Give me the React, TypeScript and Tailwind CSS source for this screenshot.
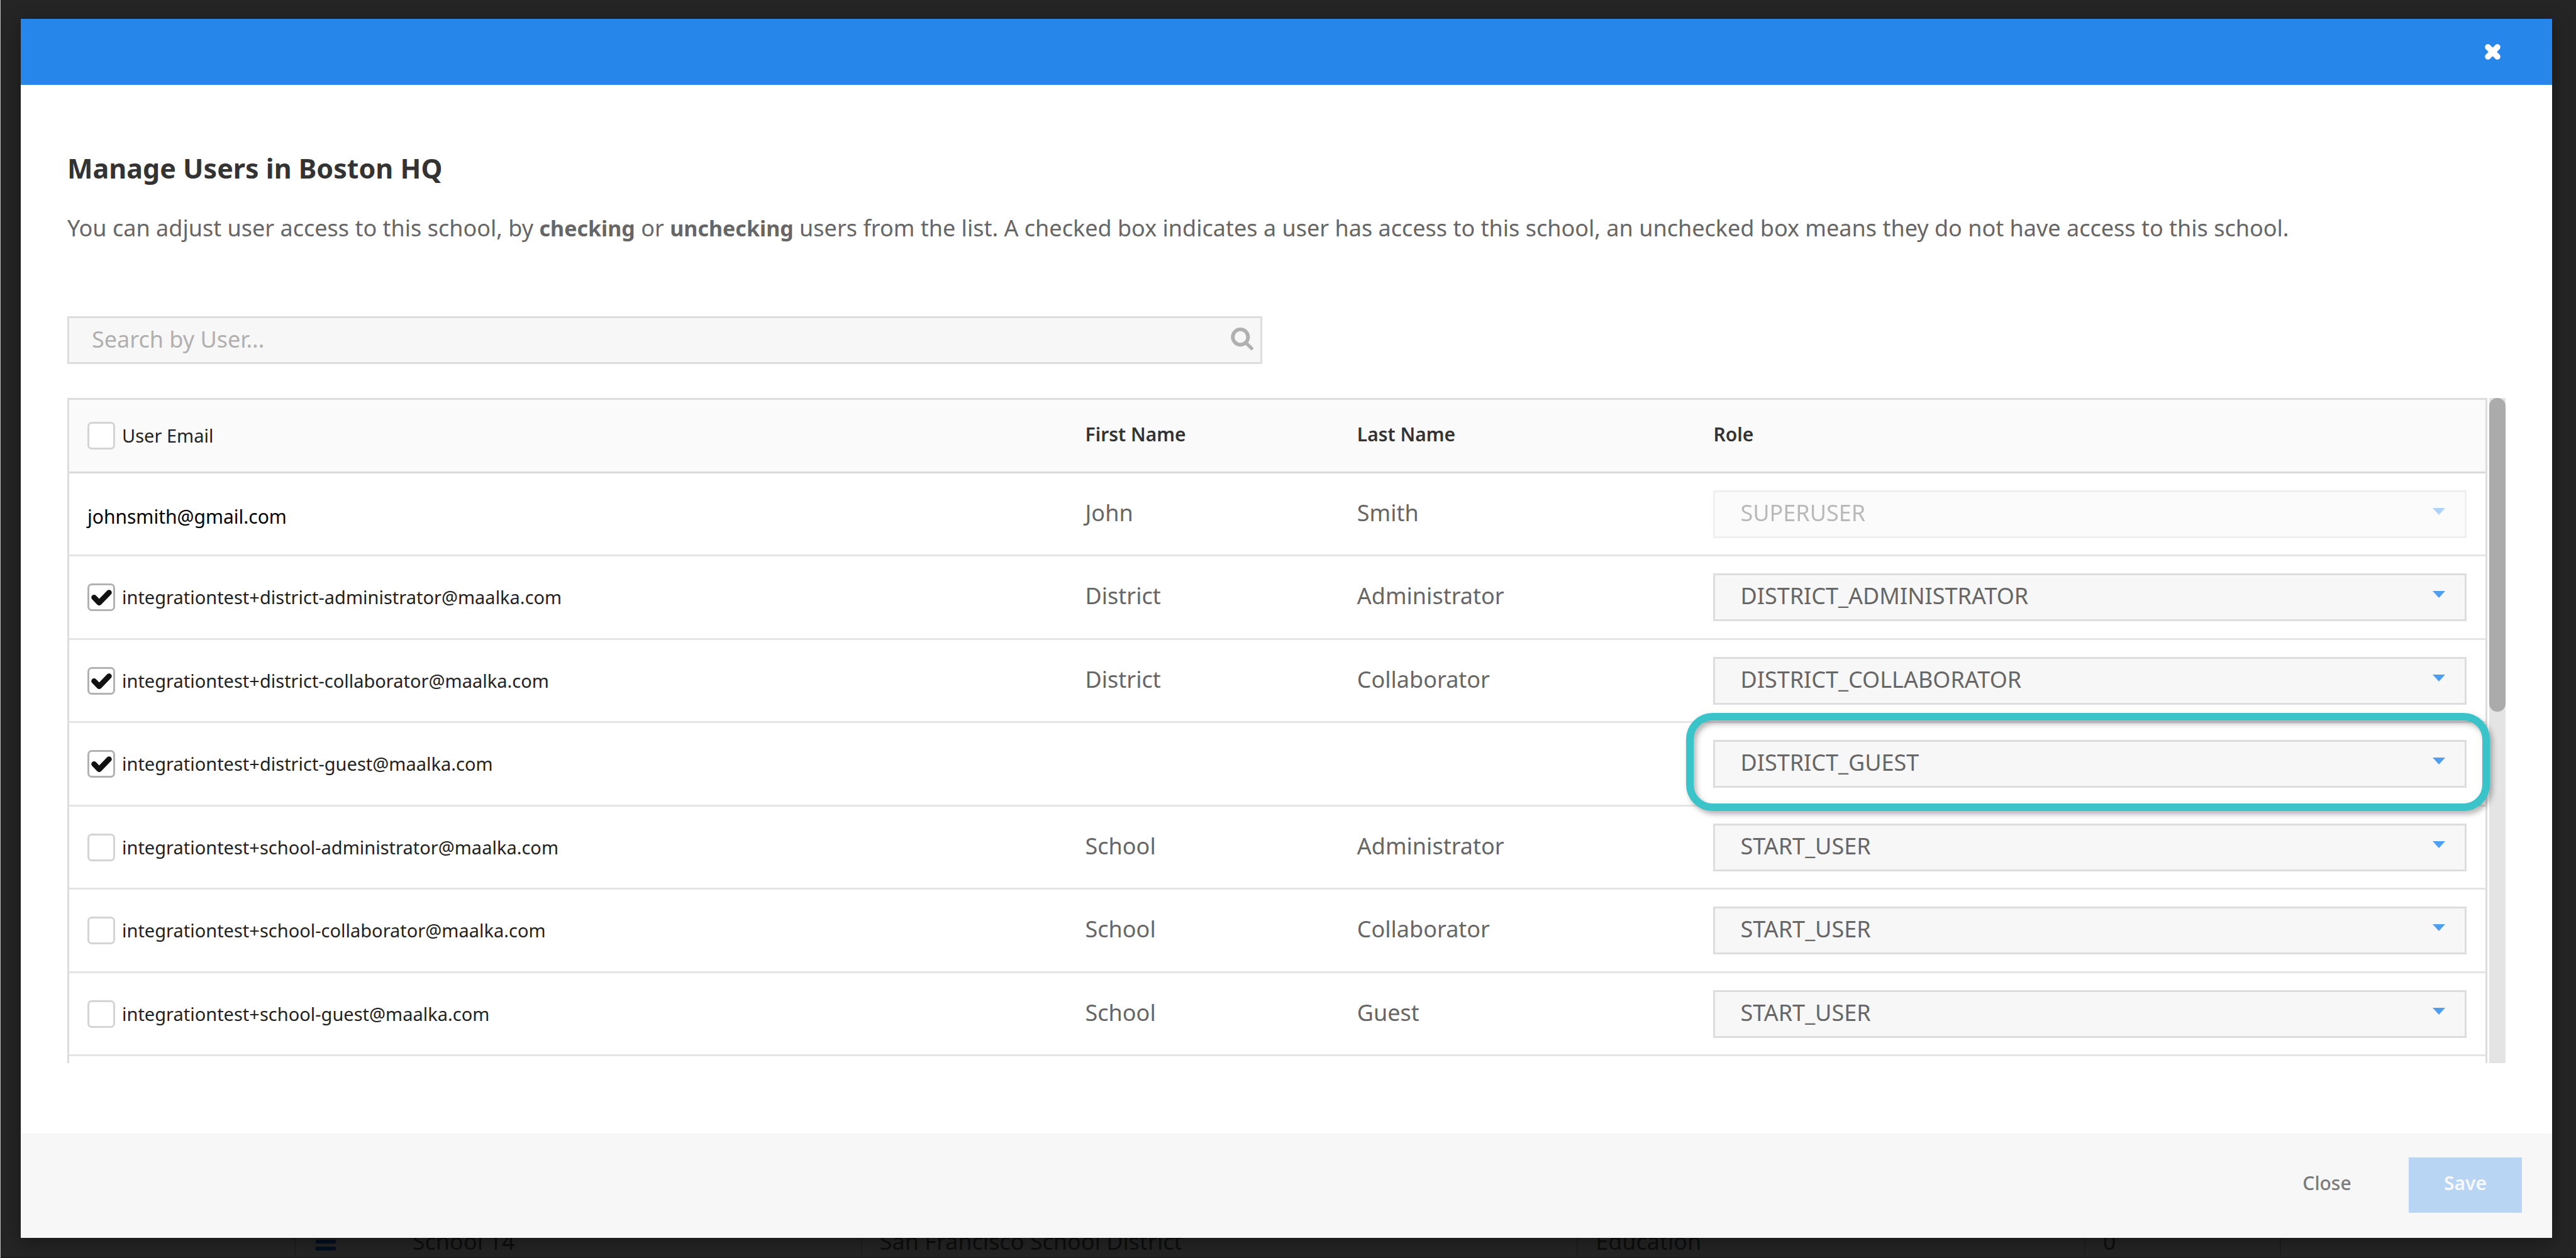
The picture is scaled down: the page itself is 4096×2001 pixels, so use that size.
import React, { useState } from "react";

type Role =
  | "SUPERUSER"
  | "DISTRICT_ADMINISTRATOR"
  | "DISTRICT_COLLABORATOR"
  | "DISTRICT_GUEST"
  | "START_USER";

const ROLES: Role[] = [
  "SUPERUSER",
  "DISTRICT_ADMINISTRATOR",
  "DISTRICT_COLLABORATOR",
  "DISTRICT_GUEST",
  "START_USER",
];

interface User {
  email: string;
  first: string;
  last: string;
  role: Role;
  checked?: boolean;
  locked?: boolean;
  highlighted?: boolean;
}

const USERS: User[] = [
  { email: "johnsmith@gmail.com", first: "John", last: "Smith", role: "SUPERUSER", locked: true },
  { email: "integrationtest+district-administrator@maalka.com", first: "District", last: "Administrator", role: "DISTRICT_ADMINISTRATOR", checked: true },
  { email: "integrationtest+district-collaborator@maalka.com", first: "District", last: "Collaborator", role: "DISTRICT_COLLABORATOR", checked: true },
  { email: "integrationtest+district-guest@maalka.com", first: "", last: "", role: "DISTRICT_GUEST", checked: true, highlighted: true },
  { email: "integrationtest+school-administrator@maalka.com", first: "School", last: "Administrator", role: "START_USER" },
  { email: "integrationtest+school-collaborator@maalka.com", first: "School", last: "Collaborator", role: "START_USER" },
  { email: "integrationtest+school-guest@maalka.com", first: "School", last: "Guest", role: "START_USER" },
];

function CheckboxField({ label, defaultChecked = false }: { label: string; defaultChecked?: boolean }) {
  const [checked, setChecked] = useState(defaultChecked);
  return (
    <label className="flex items-center gap-[11px] text-[29px] leading-10 font-normal text-[#222222]">
      <span className="relative flex">
        <input
          type="checkbox"
          checked={checked}
          onChange={(e) => setChecked(e.target.checked)}
          className="size-11 appearance-none rounded-[7px] border-3 border-[#d4d4d4] bg-white checked:border-[#b2b2b2]"
        />
        {checked && (
          <svg viewBox="0 0 188 188" className="pointer-events-none absolute inset-0 size-11" aria-hidden="true">
            <path d="M45 95 L80 131 L147 62" fill="none" stroke="#111111" strokeWidth="37" strokeLinecap="round" strokeLinejoin="round" />
          </svg>
        )}
      </span>
      {label}
    </label>
  );
}

function RoleSelect({ user }: { user: User }) {
  return (
    <div className={user.locked ? "relative opacity-45" : "relative"}>
      <select
        aria-label={`Role of ${user.email}`}
        defaultValue={user.role}
        disabled={user.locked}
        className="block h-[76px] w-full appearance-none border-3 border-[#dddddd] bg-[#f7f7f7] pb-1 pl-10 text-[36px] text-[#666666] opacity-100"
      >
        {ROLES.map((role) => (
          <option key={role}>{role}</option>
        ))}
      </select>
      <svg viewBox="0 0 20 11" className="pointer-events-none absolute top-7 right-[34px] h-[11px] w-5" aria-hidden="true">
        <path d="M0 0 H20 L10 11 Z" fill="#509eee" />
      </svg>
      {user.highlighted && (
        <div className="pointer-events-none absolute -top-[43px] -right-[37px] -bottom-[37px] -left-[43px] z-10 rounded-[42px] border-12 border-[#3ac3c9] drop-shadow-[4px_5px_4px_rgba(0,0,0,0.3)]" />
      )}
    </div>
  );
}

function PageBehind() {
  return (
    <div aria-hidden="true" className="absolute inset-x-0 bottom-0 flex h-[50px] border-b-2 border-[#1c1c1c] text-[36px] leading-[48px] text-[#0e0e0e]">
      <div className="w-[11.4%]" />
      <div className="flex w-[22%] items-center gap-[122px] border-l-2 border-[#1e1e1e] pl-8">
        <svg viewBox="0 0 32 28" className="h-7 w-8">
          <path d="M0 0 H32 V6 H0 Z M0 11 H32 V17 H0 Z M0 22 H32 V28 H0 Z" fill="#04101f" />
        </svg>
        School 14
      </div>
      <div className="w-[27.8%] border-l-2 border-[#1e1e1e] pl-7">San Francisco School District</div>
      <div className="w-[19.7%] border-l-2 border-[#1e1e1e] pl-7">Education</div>
      <div className="w-[7.6%] border-l-2 border-[#1e1e1e] pl-7">0</div>
      <div className="flex-1 border-l-2 border-[#1e1e1e]" />
    </div>
  );
}

export default function App() {
  return (
    <div className="relative flex h-screen overflow-hidden border-l border-[#bbbbbb] bg-[#252525] pt-[30px] pr-[38px] pb-8 pl-8 font-['Noto_Sans',sans-serif]">
      <PageBehind />

      <section role="dialog" aria-labelledby="dialog-title" className="relative flex min-w-0 flex-1 flex-col bg-white shadow-[0_8px_30px_rgba(0,0,0,0.35)]">
        <header className="flex h-[105px] shrink-0 items-center justify-end bg-[#2686ea] pr-[82px]">
          <button type="button" aria-label="Close dialog" className="flex">
            <svg viewBox="0 0 106 106" className="size-[25px]" aria-hidden="true">
              <path d="M21 21 L85 85 M85 21 L21 85" fill="none" stroke="#ffffff" strokeWidth="40" strokeLinecap="round" />
            </svg>
          </button>
        </header>

        <main className="flex min-h-0 flex-1 flex-col pt-[105px] pr-[74px] pb-28 pl-[74px]">
          <h1 id="dialog-title" className="text-[43px] leading-14 font-bold text-[#333333]">
            Manage Users in Boston HQ
          </h1>
          <p className="mt-[43px] text-[36px] leading-12 text-[#666666]">
            You can adjust user access to this school, by <strong className="text-[34px] font-bold">checking</strong> or{" "}
            <strong className="text-[34px] font-bold">unchecking</strong> users from the list. A checked box indicates a user has
            access to this school, an unchecked box means they do not have access to this school.
          </p>

          <div className="relative mt-[116px] w-[49%]">
            <input
              type="text"
              aria-label="Search by user"
              placeholder="Search by User..."
              className="block h-[76px] w-full border-3 border-[#dddddd] bg-[#f7f7f7] pr-16 pb-1 pl-9 text-[36px] text-[#666666] placeholder:text-[#b0b0b0]"
            />
            <svg viewBox="0 0 148 148" className="pointer-events-none absolute top-[18px] right-[14px] size-9" aria-hidden="true">
              <circle cx="63" cy="62" r="50" fill="none" stroke="#b0b0b0" strokeWidth="24" />
              <path d="M100 100 L136 136" stroke="#b0b0b0" strokeWidth="22" strokeLinecap="round" />
            </svg>
          </div>

          <div className="mt-[54px] flex min-h-0 flex-1 gap-[3px] overflow-hidden">
            <div className="min-w-0 flex-1 border-x-3 border-t-3 border-[#dddddd]">
              <table className="w-full table-fixed border-separate border-spacing-0 text-left">
                <colgroup>
                  <col className="w-[42.05%]" />
                  <col className="w-[11.25%]" />
                  <col className="w-[14.75%]" />
                  <col />
                </colgroup>
                <thead className="bg-[#fafafa] text-[30px] leading-10 text-[#333333]">
                  <tr className="h-[117px]">
                    <th scope="col" className="border-b-3 border-[#dadada] pl-[29px]">
                      <CheckboxField label="User Email" />
                    </th>
                    <th scope="col" className="border-b-3 border-[#dadada] pb-1 font-semibold">First Name</th>
                    <th scope="col" className="border-b-3 border-[#dadada] pb-1 font-semibold">Last Name</th>
                    <th scope="col" className="border-b-3 border-[#dadada] pb-1 font-semibold">Role</th>
                  </tr>
                </thead>
                <tbody className="text-[36px] leading-12 text-[#666666]">
                  {USERS.map((user) => (
                    <tr key={user.email} className="h-[132px] even:h-[133px]">
                      <td className="border-b-3 border-[#e5e5e5] pl-[29px]">
                        {user.locked ? (
                          <span className="block pt-2 text-[30px] leading-10 text-black">{user.email}</span>
                        ) : (
                          <CheckboxField label={user.email} defaultChecked={user.checked} />
                        )}
                      </td>
                      <td className="border-b-3 border-[#e5e5e5] pb-1">{user.first}</td>
                      <td className="border-b-3 border-[#e5e5e5] pb-1">{user.last}</td>
                      <td className="border-b-3 border-[#e5e5e5] pr-[30px]">
                        <RoleSelect user={user} />
                      </td>
                    </tr>
                  ))}
                </tbody>
              </table>
            </div>
            <div className="w-[26px] bg-[#e4e4e4]">
              <div className="h-[47.2%] rounded-full bg-[#ababab]" />
            </div>
          </div>
        </main>

        <footer className="flex shrink-0 justify-end gap-10 bg-[#f7f7f7] pt-[38px] pr-12 pb-10">
          <button type="button" className="h-[88px] w-[180px] pb-2 text-[30px] font-medium text-[#7a7a7a]">
            Close
          </button>
          <button type="button" disabled className="h-[88px] w-[180px] bg-[#b9d5f4] pb-2 text-[30px] font-semibold text-[#f8f8f8]">
            Save
          </button>
        </footer>
      </section>
    </div>
  );
}
